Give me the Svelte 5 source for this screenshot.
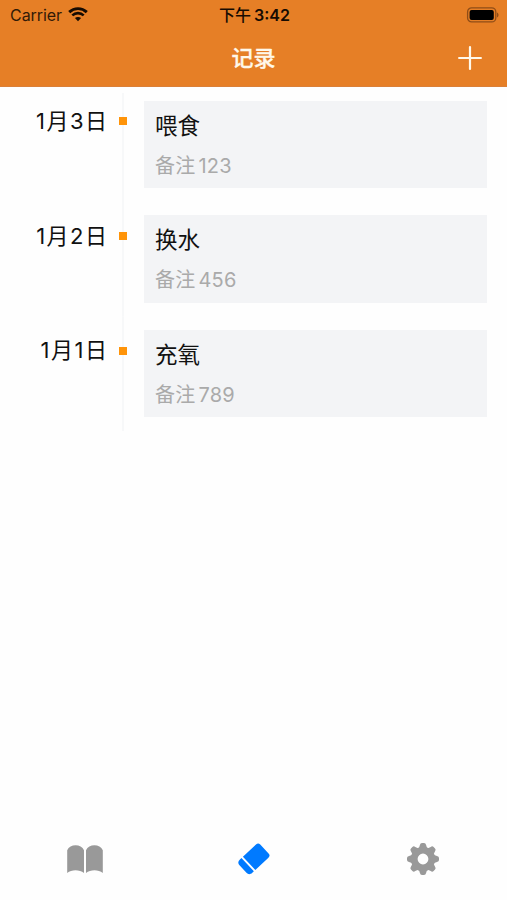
<script>
  let records = $state([
    { id: 1, date: '1月3日', title: '喂食', prefix: '备注', note: '123' },
    { id: 2, date: '1月2日', title: '换水', prefix: '备注', note: '456' },
    { id: 3, date: '1月1日', title: '充氧', prefix: '备注', note: '789' }
  ]);

  const teeth = [0, 45, 90, 135, 180, 225, 270, 315];
</script>

<div class="screen">
  <header>
    <div class="status-bar">
      <div class="carrier">
        <span>Carrier</span>
        <svg width="20" height="15" viewBox="0 0 20 15" fill="none" stroke="#160b02">
          <path d="M1.2 5.1C6.2 0.4 13.8 0.4 18.8 5.1" stroke-width="2.9" />
          <path d="M4.3 8.4C7.6 5.3 12.4 5.3 15.7 8.4" stroke-width="2.6" />
          <path d="M10 14.2L6.9 11.1C8.6 9.5 11.4 9.5 13.1 11.1Z" fill="#160b02" stroke="none" />
        </svg>
      </div>
      <div class="time"><span>下午</span><span>3:42</span></div>
      <div class="battery">
        <svg width="34" height="16" viewBox="0 0 34 16">
          <rect x="1.6" y="0.9" width="28.2" height="14" rx="4" fill="none" stroke="#8f4d17" stroke-width="1.3" />
          <rect x="3.6" y="2.9" width="24.2" height="10" rx="2" fill="#000" />
          <path d="M31 5.5C33 6.2 33 9.7 31 10.4Z" fill="#8f4d17" />
        </svg>
      </div>
    </div>
    <div class="nav-bar">
      <h1>记录</h1>
      <button class="add" aria-label="add">
        <svg width="24" height="24" viewBox="0 0 24 24" stroke="#fff8ea" stroke-width="2.2" stroke-linecap="round">
          <path d="M12 1.1V22.9M1.1 12H22.9" />
        </svg>
      </button>
    </div>
  </header>

  <main>
    {#each records as record (record.id)}
      <div class="record">
        <div class="date">{record.date}</div>
        <div class="timeline"><span class="dot"></span></div>
        <div class="card">
          <div class="title">{record.title}</div>
          <div class="note"><span>{record.prefix}</span><span>{record.note}</span></div>
        </div>
      </div>
    {/each}
  </main>

  <nav class="tab-bar">
    <button class="tab" aria-label="book">
      <svg width="38" height="34" viewBox="0 0 38 34" fill="currentColor">
        <path d="M1.2 8.2C2.6 5.2 6 3.3 9.6 3.3S16.6 5.2 18 8.2V31C13.5 27.4 5.5 27.4 1.2 31Z" />
        <path d="M20 8.2C21.4 5.2 24.8 3.3 28.4 3.3S35.4 5.2 36.8 8.2V31C32.5 27.4 24.5 27.4 20 31Z" />
      </svg>
    </button>
    <button class="tab active" aria-label="records">
      <svg width="34" height="34" viewBox="0 0 34 34" fill="currentColor">
        <g transform="translate(16.8 17.1) rotate(-43)">
          <path d="M-6.3 -9.2H11.6Q14.6 -9.2 14.6 -6.2V6Q14.6 9 11.6 9H-6.3Z" />
          <path d="M-8.3 -9.2V9H-10.4C-13.4 9 -14.7 7.3 -14.7 5V-5.2C-14.7 -7.5 -13.4 -9.2 -10.4 -9.2Z" />
        </g>
      </svg>
    </button>
    <button class="tab" aria-label="settings">
      <svg width="34" height="34" viewBox="0 0 34 34">
        <g transform="translate(17 17)">
          {#each teeth as angle}
            <path d="M-4.2 -10.5L-3.1 -14Q-2.7 -16 -1 -16H1Q2.7 -16 3.1 -14L4.2 -10.5Z" fill="currentColor" transform="rotate({angle})" />
          {/each}
          <circle r="8.8" fill="none" stroke="currentColor" stroke-width="6.8" />
        </g>
      </svg>
    </button>
  </nav>
</div>

<style>
  :global(body) {
    background: #fff;
  }
  .screen {
    display: flex;
    flex-direction: column;
    width: 100%;
    height: 100vh;
    overflow: hidden;
    background: #fefefe;
    font-family: Inter, 'Noto Sans CJK SC', sans-serif;
  }
  button {
    display: flex;
    padding: 0;
    border: 0;
    background: none;
  }
  svg {
    display: block;
  }
  header {
    flex: none;
    height: 87.4px;
    box-sizing: border-box;
    background: #e67f26;
    border-bottom: 1px solid #da8039;
  }
  .status-bar {
    display: grid;
    grid-template-columns: 1fr auto 1fr;
    align-items: center;
    height: 29px;
    padding: 0 7px 0 10px;
    color: #321a07;
  }
  .carrier {
    display: flex;
    align-items: center;
    gap: 6px;
    font-size: 16px;
    letter-spacing: -0.05px;
  }
  .time {
    display: flex;
    align-items: center;
    gap: 3px;
    margin-left: -1px;
    font-size: 16px;
    font-weight: 600;
    line-height: 20px;
    color: #160b02;
  }
  .time span:first-child {
    font-weight: 500;
  }
  .battery {
    display: flex;
    justify-content: flex-end;
  }
  .nav-bar {
    display: grid;
    grid-template-columns: 1fr auto 1fr;
    align-items: center;
    height: 57px;
    padding: 0 25px;
  }
  h1 {
    grid-column: 2;
    margin: 0;
    color: #fff8ea;
    font-size: 22px;
    font-weight: 500;
    line-height: 30px;
    -webkit-text-stroke: 0.3px #fff8ea;
  }
  .add {
    justify-self: end;
  }
  main {
    flex: 1;
  }
  .record {
    display: grid;
    grid-template-columns: 107px 32px 1fr;
    height: 114.6px;
  }
  .date {
    margin-right: -1.5px;
    padding-top: 17.8px;
    color: #111;
    font-size: 22px;
    line-height: 32px;
    letter-spacing: 1.5px;
    text-align: right;
    white-space: nowrap;
  }
  .timeline {
    display: flex;
    justify-content: center;
    padding-top: 30px;
    background: linear-gradient(#f7f8f9, #f7f8f9) center / 2px 100% no-repeat;
  }
  .record:first-child .timeline {
    background-position: center bottom;
    background-size: 2px calc(100% - 6px);
  }
  .dot {
    width: 8px;
    height: 8px;
    background: #ff9409;
  }
  .card {
    height: 87.5px;
    margin: 13.4px 20px 0 5px;
    padding: 8px 11px;
    box-sizing: border-box;
    background: #f3f4f6;
  }
  .title {
    color: #111;
    font-size: 22.5px;
    line-height: 34px;
  }
  .note {
    display: flex;
    gap: 3px;
    margin-top: 7px;
    color: #aaa;
    font-size: 20px;
    line-height: 32px;
    letter-spacing: 0.2px;
  }
  .tab-bar {
    display: flex;
    flex: none;
    height: 82px;
  }
  .tab {
    flex: 1;
    align-items: center;
    justify-content: center;
    color: #999;
  }
  .tab.active {
    color: #007aff;
  }
</style>
